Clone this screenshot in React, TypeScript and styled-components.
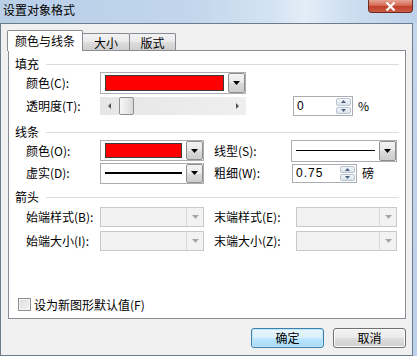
import React from 'react'
import styled, { createGlobalStyle } from 'styled-components'

const GlobalStyle = createGlobalStyle`
    html, body {
        margin: 0;
        padding: 0;
    }

    body {
        font-family: "Noto Sans CJK SC", "Liberation Sans", sans-serif;
        font-size: 12px;
        line-height: 14px;
        color: #000;
        overflow: hidden;
    }

    * {
        box-sizing: border-box;
    }
`

const Window = styled.div`
    width: 417px;
    height: 356px;
    display: flex;
    flex-direction: column;
    background: linear-gradient(180deg, #c3d7ed 0%, #bcd1ea 100%);
`

const TitleBar = styled.div`
    height: 23px;
    flex: none;
    display: flex;
    align-items: flex-start;
    justify-content: space-between;
    background: linear-gradient(90deg, #b9cfe8 0%, #c1d6ec 45%, #d5e4f3 66%, #e3edf7 73%, #cadcef 86%, #bcd2ea 100%);
`

const Title = styled.div`
    padding: 3px 0 0 3px;
    line-height: 14px;
`

const CloseButton = styled.div`
    width: 45px;
    height: 13px;
    margin-right: 4px;
    border: 1px solid #6e2b21;
    border-top: none;
    border-radius: 0 0 4px 4px;
    background: linear-gradient(180deg, #e7a594 0%, #d56a55 45%, #c23f29 55%, #cc5e47 100%);
    display: flex;
    align-items: center;
    justify-content: center;
`

const Frame = styled.div`
    flex: 1;
    min-height: 0;
    display: flex;
    padding-right: 4px;
`

const Client = styled.div`
    flex: 1;
    display: flex;
    flex-direction: column;
    border: 1px solid #6d7c8d;
    background: #f0f0f0;
    padding: 6px 6px 0 7px;
`

const TabStrip = styled.div`
    height: 20px;
    display: flex;
    align-items: flex-end;
    margin-left: -1px;
`

const Tab = styled.div<{ $active?: boolean; $w: number }>`
    position: relative;
    z-index: ${(p) => (p.$active ? 2 : 1)};
    width: ${(p) => p.$w}px;
    height: ${(p) => (p.$active ? 21 : 17)}px;
    margin-bottom: ${(p) => (p.$active ? -1 : 0)}px;
    margin-left: ${(p) => (p.$active ? 0 : -1)}px;
    border: 1px solid #898c95;
    border-bottom: none;
    border-radius: 2px 2px 0 0;
    background: ${(p) => (p.$active ? '#fff' : 'linear-gradient(180deg, #f2f2f2 0%, #ebebeb 50%, #dddddd 51%, #cfcfcf 100%)')};
    display: flex;
    justify-content: center;
    padding-top: ${(p) => (p.$active ? 3 : 2)}px;
`

const Panel = styled.div`
    height: 269px;
    flex: none;
    border: 1px solid #898c95;
    background: #fff;
    display: flex;
    flex-direction: column;
`

const GroupHeader = styled.div<{ $mt: number }>`
    margin-top: ${(p) => p.$mt}px;
    height: 14px;
    display: flex;
    align-items: center;
    gap: 7px;
    padding: 0 6px;
`

const GroupLine = styled.div`
    flex: 1;
    height: 1px;
    background: #dcdcdc;
`

const Row = styled.div<{ $mt: number; $h: number }>`
    margin-top: ${(p) => p.$mt}px;
    height: ${(p) => p.$h}px;
    display: flex;
    align-items: center;
    padding-left: 17px;
`

const Label = styled.div<{ $w: number; $ml?: number }>`
    width: ${(p) => p.$w}px;
    margin-left: ${(p) => p.$ml ?? 0}px;
    flex: none;
    white-space: nowrap;
`

const Combo = styled.div<{ $w: number; $h: number; $disabled?: boolean }>`
    width: ${(p) => p.$w}px;
    height: ${(p) => p.$h}px;
    flex: none;
    display: flex;
    align-items: center;
    gap: 4px;
    padding-left: ${(p) => (p.$disabled ? 0 : 4)}px;
    border: 1px solid ${(p) => (p.$disabled ? '#c8c8c8' : '#abadb3')};
    background: ${(p) => (p.$disabled ? '#f2f2f2' : '#fff')};
`

const Swatch = styled.div<{ $h: number }>`
    flex: 1;
    height: ${(p) => p.$h}px;
    background: #ff0000;
    border: 1px solid #3c3c3c;
`

const LineSample = styled.div<{ $weight: number }>`
    flex: 1;
    height: ${(p) => p.$weight}px;
    background: #000;
`

const Blank = styled.div`
    flex: 1;
`

const DropButton = styled.div<{ $disabled?: boolean }>`
    width: 17px;
    align-self: stretch;
    flex: none;
    display: flex;
    align-items: center;
    justify-content: center;
    border: ${(p) => (p.$disabled ? 'none' : '1px solid #8e8f8f')};
    border-left: 1px solid ${(p) => (p.$disabled ? '#d8d8d8' : '#8e8f8f')};
    border-radius: ${(p) => (p.$disabled ? 0 : 2)}px;
    background: ${(p) =>
        p.$disabled ? '#f2f2f2' : 'linear-gradient(180deg, #f4f4f4 0%, #e8e8e8 50%, #dadada 51%, #cdcdcd 100%)'};
`

const ScrollBar = styled.div`
    width: 146px;
    height: 18px;
    flex: none;
    display: flex;
    align-items: stretch;
    background: linear-gradient(90deg, #e6e6e6 0%, #efefef 100%);
`

const ScrollArrow = styled.div`
    width: 18px;
    flex: none;
    display: flex;
    align-items: center;
    justify-content: center;
`

const ScrollThumb = styled.div`
    width: 15px;
    margin-left: 1px;
    border: 1px solid #8f8f8f;
    border-radius: 2px;
    background: linear-gradient(90deg, #f6f6f6 0%, #e9e9e9 50%, #d8d8d8 100%);
`

const Spinner = styled.div<{ $w: number; $h: number; $ml: number }>`
    width: ${(p) => p.$w}px;
    height: ${(p) => p.$h}px;
    margin-left: ${(p) => p.$ml}px;
    flex: none;
    display: flex;
    align-items: stretch;
    border: 1px solid #abadb3;
    background: #fff;
    padding: 1px;
`

const SpinValue = styled.div`
    flex: 1;
    display: flex;
    align-items: center;
    padding-left: 2px;
    font-family: "Liberation Sans", sans-serif;
    letter-spacing: 1px;
`

const SpinButtons = styled.div`
    width: 15px;
    display: flex;
    flex-direction: column;
    gap: 1px;
`

const SpinHalf = styled.div`
    flex: 1;
    display: flex;
    align-items: center;
    justify-content: center;
    border: 1px solid #b9c4d1;
    border-radius: 2px;
    background: linear-gradient(180deg, #f2f6fa 0%, #dbe3ec 100%);
`

const Unit = styled.div`
    margin-left: 5px;
`

const CheckRow = styled.div`
    margin-top: 46px;
    height: 13px;
    display: flex;
    align-items: center;
    gap: 3px;
    padding-left: 9px;
`

const CheckBox = styled.div`
    width: 13px;
    height: 13px;
    border: 1px solid #8e8f8f;
    background: linear-gradient(135deg, #dcdcdc 0%, #f4f4f4 100%);
    box-shadow: inset 0 0 0 1px #f4f4f4;
`

const Footer = styled.div`
    margin-top: 9px;
    display: flex;
    justify-content: flex-end;
    gap: 9px;
`

const Button = styled.div<{ $default?: boolean }>`
    width: 73px;
    height: 20px;
    display: flex;
    align-items: center;
    justify-content: center;
    border: 1px solid ${(p) => (p.$default ? '#3c7fb1' : '#707070')};
    border-radius: 3px;
    background: ${(p) =>
        p.$default
            ? 'linear-gradient(180deg, #eaf6fd 0%, #d9f0fc 50%, #bee6fd 51%, #a7d9f5 100%)'
            : 'linear-gradient(180deg, #f2f2f2 0%, #ebebeb 50%, #dddddd 51%, #cfcfcf 100%)'};
    box-shadow: inset 0 0 0 1px ${(p) => (p.$default ? '#c2e6f8' : '#fbfbfb')};
`

const Tri = ({ dir, color, size = 7 }: { dir: 'up' | 'down' | 'left' | 'right'; color: string; size?: number }) => {
    const h = Math.ceil(size / 2)
    if (dir === 'down')
        return (
            <svg width={size} height={h} viewBox={`0 0 ${size} ${h}`}>
                <path d={`M0 0H${size}L${size / 2} ${h}Z`} fill={color} />
            </svg>
        )
    if (dir === 'up')
        return (
            <svg width={size} height={h} viewBox={`0 0 ${size} ${h}`}>
                <path d={`M0 ${h}H${size}L${size / 2} 0Z`} fill={color} />
            </svg>
        )
    if (dir === 'left')
        return (
            <svg width={h} height={size} viewBox={`0 0 ${h} ${size}`}>
                <path d={`M${h} 0V${size}L0 ${size / 2}Z`} fill={color} />
            </svg>
        )
    return (
        <svg width={h} height={size} viewBox={`0 0 ${h} ${size}`}>
            <path d={`M0 0V${size}L${h} ${size / 2}Z`} fill={color} />
        </svg>
    )
}

const Drop = ({ disabled }: { disabled?: boolean }) => (
    <DropButton $disabled={disabled}>
        <Tri dir="down" color={disabled ? '#a6a6a6' : '#000'} />
    </DropButton>
)

const Spin = ({ value, w, h, ml }: { value: string; w: number; h: number; ml: number }) => (
    <Spinner $w={w} $h={h} $ml={ml}>
        <SpinValue>{value}</SpinValue>
        <SpinButtons>
            <SpinHalf>
                <Tri dir="up" color="#4d6280" size={5} />
            </SpinHalf>
            <SpinHalf>
                <Tri dir="down" color="#4d6280" size={5} />
            </SpinHalf>
        </SpinButtons>
    </Spinner>
)

const App = () => {
    return (
        <>
            <GlobalStyle />
            <Window>
                <TitleBar>
                    <Title>设置对象格式</Title>
                    <CloseButton>
                        <svg width="11" height="9" viewBox="0 0 11 9">
                            <path d="M1.5 0.5L9.5 8.5M9.5 0.5L1.5 8.5" stroke="#fff" strokeWidth="2.2" />
                        </svg>
                    </CloseButton>
                </TitleBar>
                <Frame>
                    <Client>
                        <TabStrip>
                            <Tab $active $w={76}>颜色与线条</Tab>
                            <Tab $w={48}>大小</Tab>
                            <Tab $w={47}>版式</Tab>
                        </TabStrip>
                        <Panel>
                            <GroupHeader $mt={6}>
                                填充
                                <GroupLine />
                            </GroupHeader>
                            <Row $mt={1} $h={22}>
                                <Label $w={74}>颜色(C):</Label>
                                <Combo $w={146} $h={22}>
                                    <Swatch $h={16} />
                                    <Drop />
                                </Combo>
                            </Row>
                            <Row $mt={2} $h={20}>
                                <Label $w={74}>透明度(T):</Label>
                                <ScrollBar>
                                    <ScrollArrow>
                                        <Tri dir="left" color="#555" size={6} />
                                    </ScrollArrow>
                                    <ScrollThumb />
                                    <Blank />
                                    <ScrollArrow>
                                        <Tri dir="right" color="#555" size={6} />
                                    </ScrollArrow>
                                </ScrollBar>
                                <Spin value="0" w={60} h={20} ml={47} />
                                <Unit>%</Unit>
                            </Row>

                            <GroupHeader $mt={9}>
                                线条
                                <GroupLine />
                            </GroupHeader>
                            <Row $mt={0} $h={23}>
                                <Label $w={74}>颜色(O):</Label>
                                <Combo $w={104} $h={21}>
                                    <Swatch $h={15} />
                                    <Drop />
                                </Combo>
                                <Label $w={77} $ml={10}>线型(S):</Label>
                                <Combo $w={106} $h={22}>
                                    <LineSample $weight={1} />
                                    <Drop />
                                </Combo>
                            </Row>
                            <Row $mt={0} $h={22}>
                                <Label $w={74}>虚实(D):</Label>
                                <Combo $w={104} $h={21}>
                                    <LineSample $weight={2} />
                                    <Drop />
                                </Combo>
                                <Label $w={78} $ml={10}>粗细(W):</Label>
                                <Spin value="0.75" w={65} h={19} ml={0} />
                                <Unit>磅</Unit>
                            </Row>

                            <GroupHeader $mt={6}>
                                箭头
                                <GroupLine />
                            </GroupHeader>
                            <Row $mt={2} $h={22}>
                                <Label $w={74}>始端样式(B):</Label>
                                <Combo $w={104} $h={20} $disabled>
                                    <Blank />
                                    <Drop disabled />
                                </Combo>
                                <Label $w={82} $ml={10}>末端样式(E):</Label>
                                <Combo $w={101} $h={20} $disabled>
                                    <Blank />
                                    <Drop disabled />
                                </Combo>
                            </Row>
                            <Row $mt={2} $h={22}>
                                <Label $w={74}>始端大小(I):</Label>
                                <Combo $w={104} $h={20} $disabled>
                                    <Blank />
                                    <Drop disabled />
                                </Combo>
                                <Label $w={82} $ml={10}>末端大小(Z):</Label>
                                <Combo $w={101} $h={20} $disabled>
                                    <Blank />
                                    <Drop disabled />
                                </Combo>
                            </Row>

                            <CheckRow>
                                <CheckBox />
                                设为新图形默认值(F)
                            </CheckRow>
                        </Panel>
                        <Footer>
                            <Button $default>确定</Button>
                            <Button>取消</Button>
                        </Footer>
                    </Client>
                </Frame>
            </Window>
        </>
    )
}

export default App
